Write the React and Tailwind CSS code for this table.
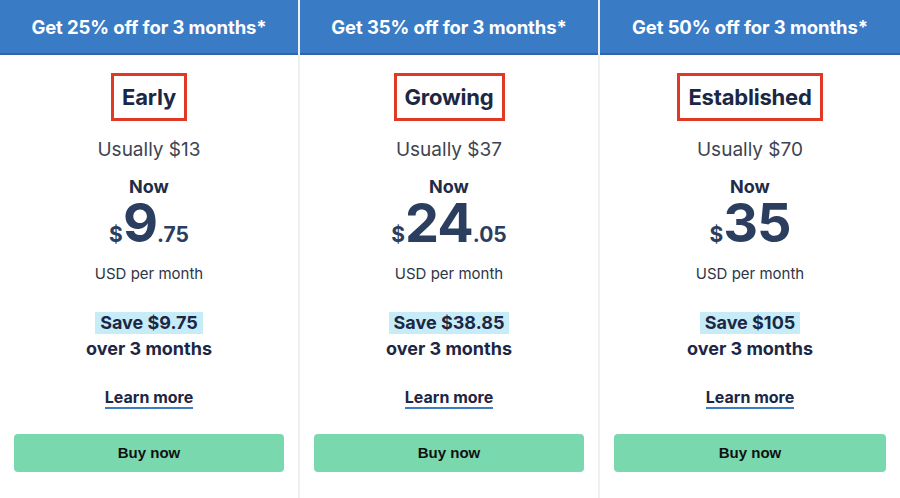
import React from "react";

const plans = [
  { offer: "Get 25% off for 3 months*", name: "Early", usual: "Usually $13", big: "9", cents: ".75", save: "Save $9.75" },
  { offer: "Get 35% off for 3 months*", name: "Growing", usual: "Usually $37", big: "24", cents: ".05", save: "Save $38.85" },
  { offer: "Get 50% off for 3 months*", name: "Established", usual: "Usually $70", big: "35", cents: "", save: "Save $105" },
];

export default function App() {
  return (
    <div className="w-[900px] h-[498px] bg-white overflow-hidden" style={{ fontFamily: "Inter, 'Liberation Sans', sans-serif" }}>
      <div className="grid grid-cols-3 h-full">
        {plans.map((p, i) => (
          <div key={i} className={`flex flex-col h-full ${i < 2 ? "border-r-2 border-[#efefef]" : ""}`}>
            <div className="h-[55px] bg-[#3a7bc6] border-b-2 border-[#2f66a8] flex items-center justify-center pt-[3px]">
              <span className="text-white font-bold text-[18.5px] tracking-[-0.1px]">{p.offer}</span>
            </div>
            <div className="flex flex-col items-center flex-1 px-[14px]">
              <div className="mt-[18px] border-[3px] border-[#e03a26] px-[8px] h-[48px] flex items-center">
                <span className="text-[22px] font-bold text-[#1c2744] tracking-[-0.2px]">{p.name}</span>
              </div>
              <div className="mt-[17px] text-[19px] text-[#3d4451] leading-[24px]">{p.usual}</div>
              <div className="mt-[15px] text-[18px] font-bold text-[#1f2c48] leading-[20px]">Now</div>
              <div className="flex items-baseline text-[#2c3e5f] font-bold leading-[46px] mt-[3px]">
                <span className="text-[21px]">$</span>
                <span className="text-[54px] tracking-[-1px]">{p.big}</span>
                {p.cents && <span className="text-[21px]">{p.cents}</span>}
              </div>
              <div className="mt-[6px] text-[15px] text-[#2e3645] leading-[20px]">USD per month</div>
              <div className="mt-[28px] text-[18px] font-bold text-[#1c2744] leading-[22px] bg-[#c6ecf8] px-[5px]">{p.save}</div>
              <div className="mt-[4px] text-[18px] font-bold text-[#1c2744] leading-[22px]">over 3 months</div>
              <div className="mt-[27px] text-[16px] font-bold text-[#1c2744] leading-[20px] border-b-2 border-[#3a7bc6]">Learn more</div>
              <button className="mt-[25px] w-full h-[38px] rounded-[4px] bg-[#79d8ae] text-[15px] font-bold text-[#111]" style={{ fontFamily: "'Liberation Sans', Arial, sans-serif" }}>Buy now</button>
            </div>
          </div>
        ))}
      </div>
    </div>
  );
}
